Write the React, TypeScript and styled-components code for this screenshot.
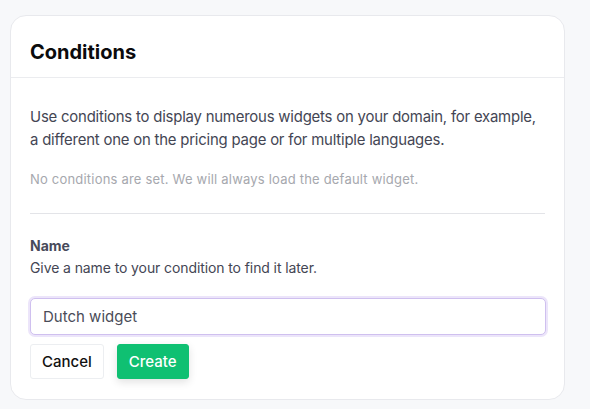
import styled, { createGlobalStyle } from 'styled-components';

const GlobalStyle = createGlobalStyle`
  body {
    margin: 0;
    background: #f7f8fa;
    font-family: Inter, 'Liberation Sans', sans-serif;
  }
`;

export default function App() {
  return (
    <>
      <GlobalStyle />
      <Page>
        <Card>
          <CardHeader>
            <Title>Conditions</Title>
          </CardHeader>
          <CardBody>
            <Intro>
              Use conditions to display numerous widgets on your domain, for example,
              a different one on the pricing page or for multiple languages.
            </Intro>
            <Empty>No conditions are set. We will always load the default widget.</Empty>
            <Divider />
            <FieldLabel>Name</FieldLabel>
            <FieldHint>Give a name to your condition to find it later.</FieldHint>
            <NameInput type='text' defaultValue='Dutch widget' />
            <Actions>
              <Button>Cancel</Button>
              <Button $primary>Create</Button>
            </Actions>
          </CardBody>
        </Card>
      </Page>
    </>
  );
}

const Page = styled.div`
  padding: 15px 25px 0 10px;
`;

const Card = styled.div`
  width: 555px;
  height: 385px;
  box-sizing: border-box;
  background: #fff;
  border: 1px solid #e8e9ed;
  border-radius: 16px;
`;

const CardHeader = styled.div`
  height: 62px;
  box-sizing: border-box;
  padding: 24px 19px 0;
  border-bottom: 1px solid #ebecef;
`;

const Title = styled.h2`
  margin: 0;
  font-size: 20px;
  line-height: 24px;
  font-weight: 700;
  color: #0b0b0d;
`;

const CardBody = styled.div`
  padding: 28px 19px 0;
`;

const Intro = styled.p`
  margin: 0;
  font-size: 14.9px;
  line-height: 23px;
  color: #444654;
  letter-spacing: -0.2px;
`;

const Empty = styled.p`
  margin: 17px 0 0;
  font-size: 13px;
  line-height: 20px;
  color: #a6a8ae;
  letter-spacing: 0.2px;
`;

const Divider = styled.hr`
  margin: 24px 0 0;
  border: none;
  border-top: 1px solid #e3e4e8;
`;

const FieldLabel = styled.div`
  margin-top: 21px;
  font-size: 14px;
  font-weight: 700;
  line-height: 22px;
  color: #474a5a;
`;

const FieldHint = styled.div`
  font-size: 14px;
  line-height: 22px;
  color: #444654;
  letter-spacing: -0.1px;
`;

const NameInput = styled.input`
  display: block;
  box-sizing: border-box;
  margin-top: 19px;
  width: 516px;
  height: 37px;
  padding: 0 12px;
  font-family: Inter, 'Liberation Sans', sans-serif;
  font-size: 15px;
  color: #4a4c58;
  background: #fff;
  border: 1.5px solid #cfc0ef;
  border-radius: 5px;
  box-shadow: 0 0 0 2px #ece5fa;
  outline: none;
`;

const Actions = styled.div`
  display: flex;
  gap: 13px;
  margin-top: 9px;
`;

const Button = styled.button<{ $primary?: boolean }>`
  height: 35px;
  padding: 0 11px;
  font-family: Inter, 'Liberation Sans', sans-serif;
  font-size: 15px;
  font-weight: 500;
  color: ${(p) => (p.$primary ? '#fff' : '#111')};
  background: ${(p) => (p.$primary ? '#0fc072' : '#fff')};
  border: 1px solid ${(p) => (p.$primary ? '#0fc072' : '#eceef1')};
  border-radius: 3px;
  box-shadow: ${(p) => (p.$primary ? '0 3px 8px rgba(0, 0, 0, 0.12)' : 'none')};
  cursor: pointer;
`;
